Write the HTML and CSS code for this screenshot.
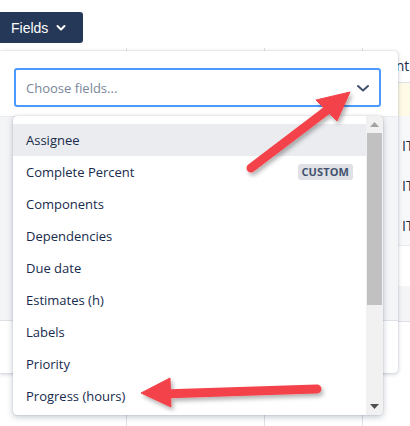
FILE: index.html
```
<!DOCTYPE html>
<html>
<head>
<meta charset="utf-8">
<link rel="stylesheet" href="styles.css">
</head>
<body>
<div class="page">
  <div class="toolbar">
    <button class="fields-btn"><span>Fields</span>
      <svg class="btn-chev" width="10" height="8" viewBox="0 0 10 8"><path d="M1.5 2 L5 5.5 L8.5 2" fill="none" stroke="#fff" stroke-width="2" stroke-linecap="round" stroke-linejoin="round"/></svg>
    </button>
  </div>

  <div class="table">
    <div class="col c1"></div>
    <div class="col c2"></div>
    <div class="col c3"></div>
    <div class="col c4">
      <div class="th"><span class="th-text">Parent</span></div>
      <div class="band-yellow"></div>
      <div class="band-gray">
        <div class="key">IT-12</div>
        <div class="key">IT-13</div>
        <div class="key">IT-14</div>
      </div>
      <div class="band-white"></div>
      <div class="band-gray2"></div>
    </div>
  </div>

  <div class="popup">
    <div class="select">
      <span class="placeholder">Choose fields...</span>
      <svg class="sel-chev" width="14" height="9" viewBox="0 0 14 9"><path d="M2 2 L7 6.5 L12 2" fill="none" stroke="#42526E" stroke-width="2" stroke-linecap="round" stroke-linejoin="round"/></svg>
    </div>
    <div class="popup-body"></div>
  </div>

  <div class="menu">
    <ul class="menu-list">
      <li class="item active">Assignee</li>
      <li class="item">Complete Percent <span class="lozenge">CUSTOM</span></li>
      <li class="item">Components</li>
      <li class="item">Dependencies</li>
      <li class="item">Due date</li>
      <li class="item">Estimates (h)</li>
      <li class="item">Labels</li>
      <li class="item">Priority</li>
      <li class="item">Progress (hours)</li>
    </ul>
    <div class="scrollbar">
      <div class="sb-btn"><svg width="9" height="5" viewBox="0 0 9 5"><path d="M0 5 L4.5 0 L9 5 Z" fill="#A3A3A3"/></svg></div>
      <div class="sb-track"><div class="sb-thumb"></div></div>
      <div class="sb-btn sb-down"><svg width="9" height="5" viewBox="0 0 9 5"><path d="M0 0 L4.5 5 L9 0 Z" fill="#505050"/></svg></div>
    </div>
  </div>

  <svg class="arrows" width="410" height="426" viewBox="0 0 410 426">
    <defs>
      <filter id="sh" x="-20%" y="-20%" width="140%" height="140%">
        <feDropShadow dx="2" dy="3" stdDeviation="2" flood-color="#000" flood-opacity="0.3"/>
      </filter>
    </defs>
    <g filter="url(#sh)" fill="#F4434B" stroke="#F4434B">
      <line x1="251" y1="168" x2="326" y2="111" stroke-width="9" stroke-linecap="round"/>
      <path d="M350 92 L316 100 L337 121 Z" stroke-width="1" stroke-linejoin="round"/>
      <line x1="162" y1="394" x2="317" y2="389" stroke-width="9" stroke-linecap="round"/>
      <path d="M141 393 L170 378 L171 407 Z" stroke-width="1" stroke-linejoin="round"/>
    </g>
  </svg>
</div>
</body>
</html>
```

FILE: styles.css
```
* { box-sizing: border-box; }
html, body { margin: 0; padding: 0; }
body {
  width: 410px;
  height: 426px;
  overflow: hidden;
  background: #fff;
  font-family: "Open Sans", "Noto Sans", sans-serif;
  color: #172B4D;
}
.page {
  position: relative;
  width: 410px;
  height: 426px;
  overflow: hidden;
}
.toolbar {
  height: 48px;
  padding-top: 12px;
}
.fields-btn {
  display: flex;
  align-items: center;
  gap: 8px;
  margin: 0 0 0 -6px;
  height: 31px;
  width: 89px;
  padding: 0 0 0 17px;
  border: none;
  border-radius: 3px;
  background: #253858;
  color: #fff;
  font-family: "Liberation Sans", Arial, sans-serif;
  font-size: 14px;
}
.btn-chev { margin-top: 1px; }

.table {
  display: grid;
  grid-template-columns: 127px 138px 98px 47px;
  height: 378px;
}
.col {
  border-right: 1px solid #DFE1E6;
}
.c4 { border-right: none; }
.th {
  height: 35px;
  border-bottom: 1px solid #DFE1E6;
  padding: 8px 0 0 0;
  white-space: nowrap;
  overflow: hidden;
  font-size: 14px;
}
.th-text { margin-left: 3px; }
.band-yellow { height: 33px; background: #FFFAE6; }
.band-gray {
  height: 130px;
  background: #F7F8F9;
  padding-top: 10px;
  border-bottom: 1px solid #EBECF0;
}
.key {
  height: 40px;
  line-height: 40px;
  padding-left: 39px;
  font-size: 14px;
  white-space: nowrap;
  overflow: hidden;
}
.band-white { height: 40px; }
.band-gray2 { height: 36px; background: #F4F5F7; border-bottom: 1px solid #DFE1E6; }

.popup {
  position: absolute;
  top: 51px;
  left: 0;
  width: 398px;
  height: 322px;
  background: #fff;
  border-radius: 0 4px 4px 0;
  box-shadow: 0 1px 4px rgba(9,30,66,0.22), 0 0 1px rgba(9,30,66,0.31);
  padding-top: 17px;
}
.select {
  margin-left: 14px;
  width: 367px;
  height: 39px;
  border: 2px solid #4C9AFF;
  border-radius: 3px;
  display: flex;
  align-items: center;
  justify-content: space-between;
  padding: 0 9px 0 10px;
}
.placeholder {
  color: #7A869A;
  font-size: 13px;
}
.sel-chev { margin-top: 1px; }
.popup-body {
  margin-top: 9px;
  height: 205px;
  background: #F4F5F7;
  border-top: 1px solid #EBECF0;
  border-bottom: 1px solid #DFE1E6;
}

.menu {
  position: absolute;
  top: 116px;
  left: 13px;
  width: 370px;
  height: 299px;
  background: #fff;
  border-radius: 4px;
  box-shadow: 0 2px 6px rgba(9,30,66,0.25), 0 0 1px rgba(9,30,66,0.4);
  display: flex;
  overflow: hidden;
}
.menu-list {
  list-style: none;
  margin: 0;
  padding: 8px 0 0 0;
  flex: 1;
}
.item {
  height: 32px;
  display: flex;
  align-items: center;
  justify-content: space-between;
  padding: 0 13px 0 13px;
  font-size: 13px;
  color: #172B4D;
}
.item.active { background: #EBECF0; }
.lozenge {
  background: #DFE1E6;
  color: #42526E;
  font-size: 11px;
  font-weight: 700;
  border-radius: 3px;
  padding: 0 4px;
  height: 16px;
  line-height: 16px;
  letter-spacing: 0.1px;
}
.scrollbar {
  width: 17px;
  background: #F1F1F1;
  display: flex;
  flex-direction: column;
  padding: 0 1px;
}
.sb-btn {
  height: 17px;
  display: flex;
  align-items: center;
  justify-content: center;
}
.sb-down { height: 17px; }
.sb-track { flex: 1; }
.sb-thumb {
  height: 172px;
  background: #C1C1C1;
}

.arrows {
  position: absolute;
  top: 0;
  left: 0;
  pointer-events: none;
}
```
